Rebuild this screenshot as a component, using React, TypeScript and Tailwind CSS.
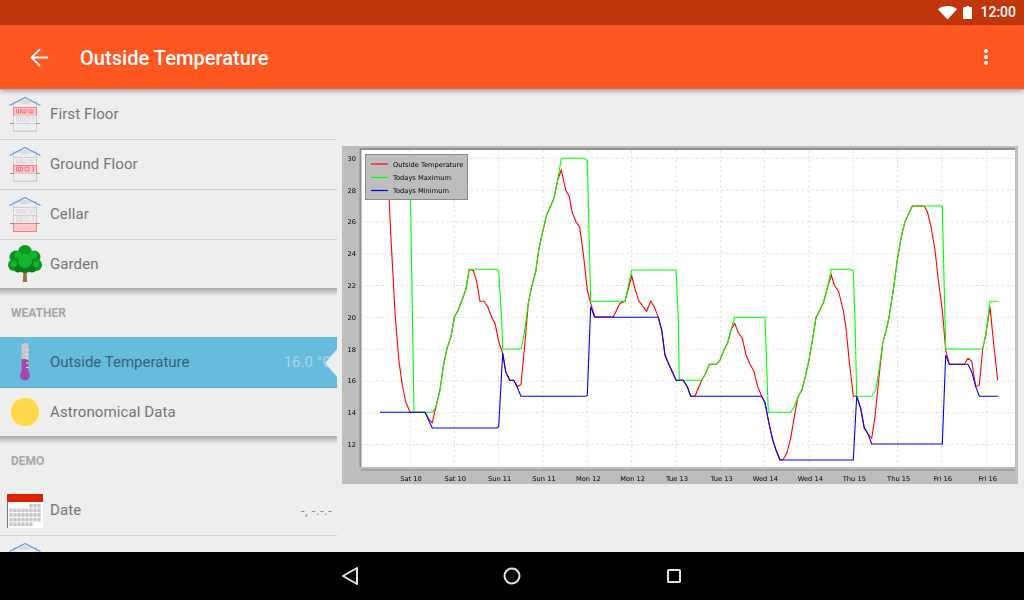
import { ArrowLeft } from 'lucide-react'

const RED = '388.7,190 390.7,233.3 395.3,317.3 399,361.7 402.3,385 405.7,401.7 410,412.3 425,412.3 429.3,420 432.3,422.7 436,406.7 440,390 443.3,366.7 447,348.3 451,336.7 454.3,317.3 458.3,310 462,300 465.7,290 469.3,269.3 473.3,270.7 476.7,281.7 480,301.3 484,301.3 487.7,306.7 491.7,317.3 495,323.3 498.7,341.7 502.7,353.3 505.7,371.7 509.7,380.3 513.7,380.3 517.7,386.7 521,384.3 524.3,350 528.3,303.3 531.7,286.7 535.7,271.7 539,248.3 542.7,231.7 546.7,215 554,198.3 557.7,180 561.3,170 565.7,190 569.3,196.7 572.3,212.7 576,221.7 579.7,227.3 583.3,253.3 587.3,290 590.7,303.3 594.7,316.7 613.3,316.7 620,303.3 625,301.3 631.7,276 635.3,290 639,301.3 643.3,306.7 646.7,311.3 650.7,301.3 654.3,306.7 658.3,317.3 661.7,330 665,355 668.3,363.3 672.3,371.7 676,380.3 683.3,380.3 687.3,386.7 690.7,396.3 695,396.3 698.3,388.3 701.7,380.3 705.7,373.3 709.3,364.3 716.3,364.3 720,360 724,350 727.7,342.7 731,330 734.7,323.3 738.3,332.7 742.3,338.3 746,355 750,364.3 753.7,370.7 757.7,386.7 761.7,396.3 765,402.7 768.3,420 772.3,438.3 776,450 780,460 783.3,459.3 786.7,453.3 790.7,438.3 794.3,416.7 798,396.7 802,390 805.3,376.7 809,360 812.7,338.3 816,317.3 820,310 823.7,301.7 827.7,286.7 831.3,275 834.3,285 838.7,291.7 842.3,306.7 843.3,310 846,328.3 849.3,361.7 853.3,396.3 856.7,396.3 860.7,408.3 864.3,428 868,434 871.7,438.3 875,416.7 879,376.7 882.7,343.3 886.7,328.3 889,317.3 893.3,290 897.3,260 901.3,236.7 905,221.7 912.3,206 924.3,206 927.3,211.7 930.7,225 935,250 938.3,280 942.3,310 945.7,350 949.3,364.3 964.3,364.3 968,358.3 971.7,361 975.7,386.7 979.3,385 982.7,349 986,333.3 990,306.7 993.3,340 997.7,380.3'
const GREEN = '410.3,185 412.3,310 414,412.3 432.3,412.3 436,406.7 440,390 443.3,366.7 447,348.3 451,336.7 454.3,317.3 458.3,310 462,300 465.7,290 469.3,269.3 496.7,269.3 498.7,271 501.7,320 502.7,349 521,349 524.3,333.3 528.3,303.3 531.7,286.7 535.7,271.7 539,248.3 542.7,231.7 546.7,215 554,198.3 557.7,180 561.3,158.3 584.3,158.3 587.3,160.7 590.7,301.3 625,301.3 631.7,270 676,270 678.3,316.7 679.3,380.3 701.7,380.3 705.7,373.3 709.3,364.3 716.3,364.3 720,360 724,350 727.7,342.7 731,330 734.7,317.3 765,317.3 768.3,412.3 790.7,412.3 794.3,406.7 798,396.7 802,390 805.3,376.7 809,360 812.7,338.3 816,317.3 820,310 823.7,301.7 827.7,286.7 831.3,269.3 850.7,269.3 853.3,271 855,320 856.7,396.3 871.7,396.3 875.7,390 879,370 882.7,343.3 886.7,328.3 889,317.3 893.3,290 897.3,260 901.3,236.7 905,221.7 912.3,206 942.3,206 945,320 945.7,349 982.7,349 986,333.3 990,301.3 998.3,301.3'
const BLUE = '380,412.3 425,412.3 432.3,428 496.7,428 498.7,426.7 502.7,353.3 505.7,371.7 509.7,380.3 513.7,380.3 517,386.7 521,396.3 585.7,396.3 587.3,395.3 590.7,306.7 594.7,317.3 658.3,317.3 661.7,330 665,355 668.3,363.3 672.3,371.7 676,380.3 683.3,380.3 687.3,386.7 690.7,396.3 761.7,396.3 765,402.7 768.3,420 772.3,438.3 776,450 780,460 853.3,460 856.7,396.3 860.7,408.3 864.3,428 868,434 871.7,444 942.3,444 945.7,355 949.3,364.3 968,364.3 971.7,371.7 975.7,386.7 979.3,396.3 998.3,396.3'

const GRID_X = [410, 454.3, 498.7, 543, 587.3, 631.7, 676, 720.7, 764.3, 809.3, 853.3, 897.7, 941.7, 986.7]
const X_LABELS = ['Sat 10', 'Sat 10', 'Sun 11', 'Sun 11', 'Mon 12', 'Mon 12', 'Tue 13', 'Tue 13', 'Wed 14', 'Wed 14', 'Thu 15', 'Thu 15', 'Fri 16', 'Fri 16']
const Y_LABELS = [30, 28, 26, 24, 22, 20, 18, 16, 14, 12]
const LEGEND = [
  { label: 'Outside Temperature', color: '#ff0000', y: 164 },
  { label: 'Todays Maximum', color: '#00ff00', y: 177.5 },
  { label: 'Todays Minimum', color: '#0000ff', y: 190.5 },
]

function Chart() {
  const font = { fontFamily: '"DejaVu Sans", sans-serif', fontSize: 6.7 }
  return (
    <svg width={676} height={338} viewBox="342 146 676 338" className="blur-[0.3px]">
      <rect x={342} y={146} width={676} height={338} fill="#bdbdbd" />
      <rect x={360} y={148} width={655} height={319} fill="#ffffff" />
      <path d="M360.5 467V149H1015" fill="none" stroke="#8f8f8f" strokeWidth={2} />
      {Y_LABELS.map(v => {
        const y = 158.3 + (30 - v) * 15.9
        return (
          <g key={v}>
            <line x1={361} x2={1015} y1={y} y2={y} stroke="#dcdcdc" strokeWidth={0.8} strokeDasharray="3 2" />
            <text x={356} y={y + 2.5} textAnchor="end" fill="#000" {...font}>{v}</text>
          </g>
        )
      })}
      {GRID_X.map((x, i) => (
        <g key={x}>
          <line x1={x} x2={x} y1={150} y2={467} stroke="#dcdcdc" strokeWidth={0.8} strokeDasharray="3 2" />
          <text x={x + 1} y={481} textAnchor="middle" fill="#000" {...font}>{X_LABELS[i]}</text>
        </g>
      ))}
      <line x1={361} x2={1015} y1={470} y2={470} stroke="#8a8a8a" />
      <polyline points={RED} fill="none" stroke="#ff0000" strokeWidth={1.1} />
      <polyline points={GREEN} fill="none" stroke="#00ff00" strokeWidth={1.1} />
      <polyline points={BLUE} fill="none" stroke="#0000ff" strokeWidth={1.1} />
      <rect x={365.5} y={154.5} width={102} height={45} fill="#bdbdbd" stroke="#8a8a8a" />
      {LEGEND.map(l => (
        <g key={l.label}>
          <line x1={371} x2={388} y1={l.y} y2={l.y} stroke={l.color} strokeWidth={1.2} />
          <text x={393} y={l.y + 2.5} fill="#000" {...font}>{l.label}</text>
        </g>
      ))}
    </svg>
  )
}

// floor: 0 top floor, 1 ground, 2 cellar
function House({ floor }: { floor: number }) {
  const bands = [[10, 8], [18, 8], [26, 8]]
  return (
    <svg width={32} height={35} viewBox="0 0 32 35" className="shrink-0">
      <rect x={4.5} y={5} width={23} height={29} fill="none" stroke="#cfcfcf" />
      {bands.map(([y, h], i) => (
        <rect
          key={i}
          x={4.5}
          y={y + 0.5}
          width={23}
          height={h}
          fill={i === floor ? '#ffc8cc' : 'none'}
          stroke={i === floor ? '#fb7f85' : '#cfcfcf'}
        />
      ))}
      <path d="M12 3.5h7v3h-7zM15.5 3.5v3" fill="none" stroke="#d4d4d4" strokeWidth={0.8} />
      <path d="M7.5 12v4h4v-4M9.5 12v4M13 12v4h4v-4M15 12v4M20 12v4h4v-4M22 12v4" fill="none" stroke={floor === 0 ? '#f0666e' : '#d4d4d4'} strokeWidth={0.8} />
      <path d="M7.5 20h6v4h-6zM9.5 20v4M11.5 20v4M16 20h4v4h-4zM23 20h1.5v4H23" fill="none" stroke={floor === 1 ? '#f0666e' : '#d4d4d4'} strokeWidth={0.8} />
      <path d="M0.5 8.5L16 0.5L31.5 8.5" fill="none" stroke="#5b97ee" strokeWidth={1.1} />
      <path d="M1 26.5h3.5M27.5 26.5h3" stroke="#666" strokeWidth={0.7} />
    </svg>
  )
}

function Tree() {
  return (
    <svg width={34} height={38} viewBox="0 0 34 38" className="shrink-0">
      <path d="M15.6 24h2.8l0.8 13h-4.4z" fill="#a56a38" />
      <circle cx={17} cy={7} r={7} fill="#0a9a24" />
      <circle cx={8} cy={12} r={6.5} fill="#0a8f22" />
      <circle cx={26} cy={12} r={6.5} fill="#0a8f22" />
      <circle cx={6} cy={20} r={6} fill="#0a9a24" />
      <circle cx={28} cy={20} r={6} fill="#0a9a24" />
      <circle cx={17} cy={20} r={8} fill="#087d1c" />
      <circle cx={10} cy={24} r={3.5} fill="#087d1c" />
      <circle cx={24} cy={24} r={3.5} fill="#087d1c" />
      <circle cx={17} cy={16} r={7} fill="#13b52f" />
      <circle cx={25} cy={10} r={4} fill="#13b52f" />
      <circle cx={10} cy={10} r={3.5} fill="#13b52f" />
      <circle cx={6} cy={19} r={3} fill="#13b52f" />
      <circle cx={28} cy={19} r={3} fill="#13b52f" />
    </svg>
  )
}

function Thermometer() {
  return (
    <svg width={10} height={38} viewBox="0 0 10 38" className="shrink-0">
      <path d="M1.5 3.5a3.5 3.5 0 0 1 7 0V28h-7z" fill="#c9c9c9" />
      <rect x={1.5} y={16} width={7} height={15} fill="#a349ad" />
      <circle cx={5} cy={32.5} r={5} fill="#a349ad" />
      <path d="M6 7h2.5M6 11.5h2.5M6 16h2.5M6 20h2.5M6 24.5h2.5" stroke="#f2f2f2" strokeWidth={1} />
    </svg>
  )
}

function Sun() {
  return (
    <svg width={34} height={34} viewBox="0 0 34 34" className="shrink-0">
      <circle cx={17} cy={17} r={16.5} fill="#f5efdc" />
      <circle cx={17} cy={17} r={14} fill="#ffd84d" />
    </svg>
  )
}

function Calendar() {
  const cells: { x: number; y: number }[] = []
  for (let r = 0; r < 5; r++) {
    for (let c = 0; c < 8; c++) {
      if (r === 0 && c < 5) continue
      if (r === 4 && c > 5) continue
      cells.push({ x: 2.3 + c * 4, y: 10 + r * 4.6 })
    }
  }
  return (
    <svg width={36} height={34} viewBox="0 0 36 34" className="shrink-0">
      <rect x={0} y={0} width={36} height={34} fill="#ffffff" />
      <rect x={0} y={0} width={36} height={8} fill="#dd2200" />
      <path d="M0.5 8v26" stroke="#777" />
      {cells.map(c => (
        <rect key={`${c.x}-${c.y}`} x={c.x} y={c.y} width={3.3} height={3.6} fill="#c8c8c8" />
      ))}
    </svg>
  )
}

function Row({
  icon,
  label,
  value,
  divider = true,
}: {
  icon: React.ReactNode
  label?: string
  value?: string
  divider?: boolean
}) {
  return (
    <div className={`flex items-center pr-[5px] ${divider ? 'h-[50px] border-b border-[#d0d0d0]' : 'h-[48px]'}`}>
      <div className="w-[50px] flex justify-center shrink-0">{icon}</div>
      {label && <span className="text-[15px] tracking-[0.1px] text-[#757575]">{label}</span>}
      {value && <span className="ml-auto text-[13px] tracking-[0.5px] text-[#8a8a8a]">{value}</span>}
    </div>
  )
}

function Band() {
  return <div className="h-[8px] bg-gradient-to-b from-[#a8a8a8] to-[#eeeeee]" />
}

function SectionHeader({ title, h }: { title: string; h: string }) {
  return (
    <div className={`${h} pl-[11px] pt-[10px] text-[12px] leading-[14px] font-bold text-[#a6a6a6]`}>
      {title}
    </div>
  )
}

export default function App() {
  return (
    <div
      className="w-[1024px] h-[600px] flex flex-col overflow-hidden bg-[#eeeeee]"
      style={{ fontFamily: 'Roboto, "Noto Sans", sans-serif' }}
    >
      {/* status bar */}
      <div className="h-[25px] shrink-0 bg-[#bf360c] flex items-center justify-end pr-[8px] text-white">
        <svg width={19} height={14} viewBox="0 0 19 14" className="mr-[6px]">
          <path d="M9.5 13.5L0 3.2C2.5 1.2 5.8 0 9.5 0s7 1.2 9.5 3.2z" fill="#ffffff" />
        </svg>
        <svg width={9} height={13} viewBox="0 0 9 13" className="mr-[8px]">
          <path d="M3 0h3v1h2a1 1 0 0 1 1 1v10a1 1 0 0 1-1 1H1a1 1 0 0 1-1-1V2a1 1 0 0 1 1-1h2z" fill="#ffffff" />
        </svg>
        <span className="text-[14px] font-medium">12:00</span>
      </div>

      {/* app bar */}
      <div className="relative z-10 h-[64px] shrink-0 bg-[#ff5722] flex items-center text-white shadow-[0_2px_5px_rgba(0,0,0,0.35)]">
        <ArrowLeft size={27} strokeWidth={1.6} className="ml-[26px]" />
        <span className="ml-[27px] pt-[2px] text-[20px] font-medium tracking-[0.05px]">Outside Temperature</span>
        <div className="ml-auto mr-[36px] flex flex-col gap-[2px]">
          <span className="w-[4px] h-[4px] rounded-full bg-white" />
          <span className="w-[4px] h-[4px] rounded-full bg-white" />
          <span className="w-[4px] h-[4px] rounded-full bg-white" />
        </div>
      </div>

      <div className="flex flex-1 min-h-0">
        {/* sidebar list */}
        <aside className="w-[337px] shrink-0 overflow-hidden pt-[1px]">
          <Row icon={<House floor={0} />} label="First Floor" />
          <Row icon={<House floor={1} />} label="Ground Floor" />
          <Row icon={<House floor={2} />} label="Cellar" />
          <Row icon={<Tree />} label="Garden" divider={false} />
          <Band />
          <SectionHeader title="WEATHER" h="h-[41px]" />
          <div className="relative h-[51px] flex items-center bg-[#67bbdc] border-b border-[#57a6c6] overflow-hidden">
            <div className="w-[50px] flex justify-center shrink-0">
              <Thermometer />
            </div>
            <span className="text-[15px] text-[#33637a]">Outside Temperature</span>
            <span className="ml-auto mr-[5px] text-[15px] text-[#a9d5e8]">16.0 °C</span>
            <div className="absolute right-0 top-[12px] w-[12px] h-[28px] bg-[#eeeeee] [clip-path:polygon(100%_0,0_50%,100%_100%)]" />
          </div>
          <Row icon={<Sun />} label="Astronomical Data" divider={false} />
          <Band />
          <SectionHeader title="DEMO" h="h-[42px]" />
          <Row icon={<Calendar />} label="Date" value="-, -.-.-" />
          <Row icon={<House floor={-1} />} />
        </aside>

        {/* chart */}
        <main className="flex-1 pl-[5px] pt-[57px]">
          <Chart />
        </main>
      </div>

      {/* nav bar */}
      <div className="h-[48px] shrink-0 bg-black flex items-center justify-center gap-[144px] pr-[2px]">
        <svg width={18} height={20} viewBox="0 0 18 20">
          <path d="M16 2L2 10l14 8z" fill="none" stroke="#e4e4e4" strokeWidth={2} strokeLinejoin="round" />
        </svg>
        <svg width={18} height={18} viewBox="0 0 18 18">
          <circle cx={9} cy={9} r={7.5} fill="none" stroke="#e4e4e4" strokeWidth={2} />
        </svg>
        <svg width={16} height={16} viewBox="0 0 16 16" className="ml-[1px]">
          <rect x={2} y={2} width={12} height={12} rx={0.5} fill="none" stroke="#e4e4e4" strokeWidth={2} />
        </svg>
      </div>
    </div>
  )
}
